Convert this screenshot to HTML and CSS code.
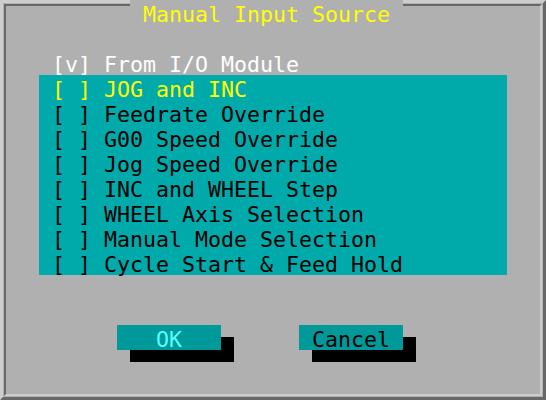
FILE: index.html
```html
<!DOCTYPE html>
<html lang="en">
<head>
    <meta charset="UTF-8">
    <title>Manual Input Source</title>
    <link rel="stylesheet" href="styles.css">
</head>
<body>
    <div class="screen">
        <div class="panel">
            <div class="options">
                <div class="line line-checked">[v] From I/O Module</div>
                <div class="group">
                    <div class="line line-active">[ ] JOG and INC</div>
                    <div class="line">[ ] Feedrate Override</div>
                    <div class="line">[ ] G00 Speed Override</div>
                    <div class="line">[ ] Jog Speed Override</div>
                    <div class="line">[ ] INC and WHEEL Step</div>
                    <div class="line">[ ] WHEEL Axis Selection</div>
                    <div class="line">[ ] Manual Mode Selection</div>
                    <div class="line">[ ] Cycle Start &amp; Feed Hold</div>
                </div>
            </div>

            <div class="buttons">
                <div class="btn btn-ok">OK</div>
                <div class="btn btn-cancel">Cancel</div>
            </div>
        </div>

        <!-- title sits on top of the frame border -->
        <div class="title">Manual Input Source</div>
    </div>
</body>
</html>
```

FILE: styles.css
```css
body {
    margin: 0;
    background: #b0b0b0;
    font-family: 'DejaVu Sans Mono', 'Liberation Mono', monospace;
    font-size: 21.6px;
}

.screen {
    position: relative;
    width: 546px;
    height: 400px;
    box-sizing: border-box;
    padding: 1px;
    border: 3px solid;
    border-color: #cdcdcd #686868 #686868 #cdcdcd;
}

.panel {
    height: 100%;
    box-sizing: border-box;
    border: 2px solid;
    border-color: #686868 #cdcdcd #cdcdcd #686868;
    padding: 44px 0 0 33px;
}

.options {
    width: 468px;
}

.line {
    height: 25px;
    box-sizing: border-box;
    padding: 2px 0 0 13px;
    line-height: 25px;
    white-space: pre;
    color: #000;
}

.line-checked {
    color: #fff;
}

.group {
    background: #00aaaa;
}

.line-active {
    color: #ffff00;
}

.buttons {
    display: flex;
    gap: 78px;
    margin-top: 50px;
    padding-left: 78px;
}

.btn {
    width: 104px;
    height: 25px;
    box-sizing: border-box;
    padding-top: 2px;
    line-height: 25px;
    text-align: center;
    background: #009999;
    box-shadow: 13px 12px 0 #000;
}

.btn-ok {
    color: #55ffff;
}

.btn-cancel {
    color: #000;
}

.title {
    position: absolute;
    top: -3px;
    left: 127px;
    width: 273px;
    height: 25px;
    box-sizing: border-box;
    padding: 2px 0 0 13px;
    line-height: 25px;
    background: #b0b0b0;
    color: #ffff00;
}
```
